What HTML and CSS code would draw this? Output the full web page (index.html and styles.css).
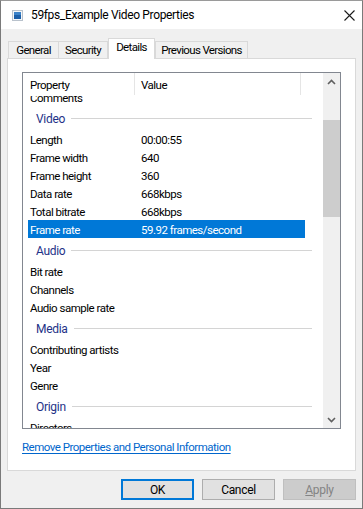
FILE: index.html
```html
<!DOCTYPE html>
<html>
<head>
<meta charset="utf-8">
<link rel="stylesheet" href="styles.css">
</head>
<body>
<div class="window">
  <div class="titlebar">
    <svg class="ticon" width="11" height="11" viewBox="0 0 11 11">
      <rect x="0.5" y="0.5" width="10" height="10" fill="#f4f6f8" stroke="#b9c2cc"/>
      <rect x="2" y="2" width="7" height="7" fill="#1c5fa8"/>
      <rect x="2" y="2" width="7" height="3" fill="#3b82c8"/>
    </svg>
    <span class="ttext">59fps_Example Video Properties</span>
    <svg class="close" width="11" height="11" viewBox="0 0 11 11">
      <path d="M0.5 0.5 L10.5 10.5 M10.5 0.5 L0.5 10.5" stroke="#1a1a1a" stroke-width="1.1" fill="none"/>
    </svg>
  </div>
  <div class="tabs">
    <div class="tab t-general">General</div>
    <div class="tab t-security">Security</div>
    <div class="tab active t-details">Details</div>
    <div class="tab t-prev">Previous Versions</div>
  </div>
  <div class="panel">
    <div class="listview">
      <div class="lv-head">
        <div class="hcell c1">Property</div>
        <div class="hcell c2">Value</div>
      </div>
      <div class="lv-body">
        <div class="rows">
          <div class="row"><span>Comments</span><span></span></div>
          <div class="group"><span class="gname">Video</span><span class="gline"></span></div>
          <div class="row"><span>Length</span><span>00:00:55</span></div>
          <div class="row"><span>Frame width</span><span>640</span></div>
          <div class="row"><span>Frame height</span><span>360</span></div>
          <div class="row"><span>Data rate</span><span>668kbps</span></div>
          <div class="row"><span>Total bitrate</span><span>668kbps</span></div>
          <div class="row sel"><span>Frame rate</span><span>59.92 frames/second</span></div>
          <div class="group"><span class="gname">Audio</span><span class="gline"></span></div>
          <div class="row"><span>Bit rate</span><span></span></div>
          <div class="row"><span>Channels</span><span></span></div>
          <div class="row"><span>Audio sample rate</span><span></span></div>
          <div class="group"><span class="gname">Media</span><span class="gline"></span></div>
          <div class="row"><span>Contributing artists</span><span></span></div>
          <div class="row"><span>Year</span><span></span></div>
          <div class="row"><span>Genre</span><span></span></div>
          <div class="group"><span class="gname">Origin</span><span class="gline"></span></div>
          <div class="row"><span>Directors</span><span></span></div>
        </div>
      </div>
      <div class="scrollbar">
        <div class="sbtn">
          <svg width="9" height="6" viewBox="0 0 9 6"><path d="M1 5 L4.5 1.5 L8 5" stroke="#606060" stroke-width="1.6" fill="none"/></svg>
        </div>
        <div class="track"><div class="thumb"></div></div>
        <div class="sbtn">
          <svg width="9" height="6" viewBox="0 0 9 6"><path d="M1 1 L4.5 4.5 L8 1" stroke="#606060" stroke-width="1.6" fill="none"/></svg>
        </div>
      </div>
    </div>
    <a class="link" href="#">Remove Properties and Personal Information</a>
  </div>
  <div class="buttons">
    <button class="btn default">OK</button>
    <button class="btn">Cancel</button>
    <button class="btn disabled"><u>A</u>pply</button>
  </div>
</div>
</body>
</html>
```
FILE: styles.css
```css
html, body {
  margin: 0;
  padding: 0;
}
body {
  width: 363px;
  height: 509px;
  overflow: hidden;
  font-family: Roboto, "Noto Sans", sans-serif;
  font-size: 11.5px;
  letter-spacing: -0.5px;
  color: #000;
}
.window {
  box-sizing: border-box;
  width: 363px;
  height: 509px;
  border: 1px solid #7a7a7a;
  border-top-color: #9a9a9a;
  background: #f0f0f0;
  display: flex;
  flex-direction: column;
}
.titlebar {
  height: 28px;
  background: #fff;
  display: flex;
  align-items: center;
  padding-left: 11px;
  padding-right: 7px;
  flex-shrink: 0;
}
.ticon {
  flex-shrink: 0;
}
.ttext {
  margin-left: 8px;
  font-size: 12px;
  letter-spacing: -0.35px;
  flex: 1;
  padding-bottom: 1px;
}
.tabs {
  display: flex;
  align-items: flex-end;
  height: 20px;
  margin-top: 9px;
  padding-left: 7px;
  position: relative;
  z-index: 1;
}
.tab {
  height: 17px;
  box-sizing: border-box;
  border: 1px solid #d9d9d9;
  border-bottom: none;
  background: #f0f0f0;
  margin-right: -1px;
  display: flex;
  align-items: center;
  justify-content: center;
  line-height: 1;
  padding-top: 1px;
  letter-spacing: -0.65px;
  white-space: nowrap;
}
.t-general { width: 51px; }
.t-security { width: 50px; }
.t-details { width: 47px; }
.t-prev { width: 93px; }
.tab.active {
  height: 21px;
  background: #fff;
  margin-bottom: -1px;
  padding: 0 0 2px 0;
  margin-left: 1px;
  margin-right: 0;
}
.panel {
  box-sizing: border-box;
  margin: 0 6px;
  height: 413px;
  background: #fff;
  border: 1px solid #d9d9d9;
  padding: 13px 14px 0 14px;
  display: flex;
  flex-direction: column;
}
.listview {
  box-sizing: border-box;
  width: 319px;
  height: 357px;
  border: 1px solid #828790;
  display: grid;
  grid-template-columns: 1fr 17px;
  grid-template-rows: 23px 1fr;
}
.lv-head {
  display: flex;
  grid-column: 1;
  grid-row: 1;
}
.hcell {
  box-sizing: border-box;
  height: 22px;
  border-right: 1px solid #e5e5e5;
  display: flex;
  align-items: center;
  padding-left: 7px;
  padding-top: 1px;
}
.hcell.c1 { width: 112px; }
.hcell.c2 { width: 166px; padding-left: 6px; }
.lv-body {
  grid-column: 1;
  grid-row: 2;
  overflow: hidden;
}
.rows {
  margin-top: -8px;
}
.row {
  box-sizing: border-box;
  height: 18px;
  width: 277px;
  margin-left: 5px;
  padding-left: 2px;
  padding-top: 1px;
  display: grid;
  grid-template-columns: 111px 1fr;
  align-items: center;
  white-space: nowrap;
}
.row.sel {
  background: #0078d7;
  color: #fff;
}
.group {
  height: 24px;
  display: flex;
  align-items: center;
  padding-left: 13px;
  padding-top: 1px;
  width: 289px;
  box-sizing: border-box;
}
.gname {
  color: #1e3287;
  font-size: 12px;
  letter-spacing: -0.3px;
}
.gline {
  flex: 1;
  height: 1px;
  background: #d4d4d4;
  margin-left: 6px;
}
.scrollbar {
  grid-column: 2;
  grid-row: 1 / 3;
  background: #f0f0f0;
  display: flex;
  flex-direction: column;
}
.sbtn {
  height: 17px;
  display: flex;
  align-items: center;
  justify-content: center;
}
.track {
  flex: 1;
}
.thumb {
  margin-top: 30px;
  height: 97px;
  background: #cdcdcd;
}
.link {
  margin-top: 11px;
  color: #0066cc;
  text-decoration: underline;
  text-underline-offset: 2px;
  align-self: flex-start;
  letter-spacing: -0.5px;
}
.buttons {
  display: flex;
  justify-content: flex-end;
  gap: 8px;
  padding-right: 6px;
  margin-top: 8px;
}
.btn {
  box-sizing: border-box;
  width: 73px;
  height: 21px;
  font-family: inherit;
  font-size: 12px;
  letter-spacing: -0.3px;
  background: #e1e1e1;
  border: 1px solid #adadad;
  padding: 0;
  color: #000;
}
.btn.default {
  border: 2px solid #0078d7;
}
.btn.disabled {
  background: #cccccc;
  border-color: #bfbfbf;
  color: #838383;
}
.btn u {
  text-decoration: underline;
}
```
